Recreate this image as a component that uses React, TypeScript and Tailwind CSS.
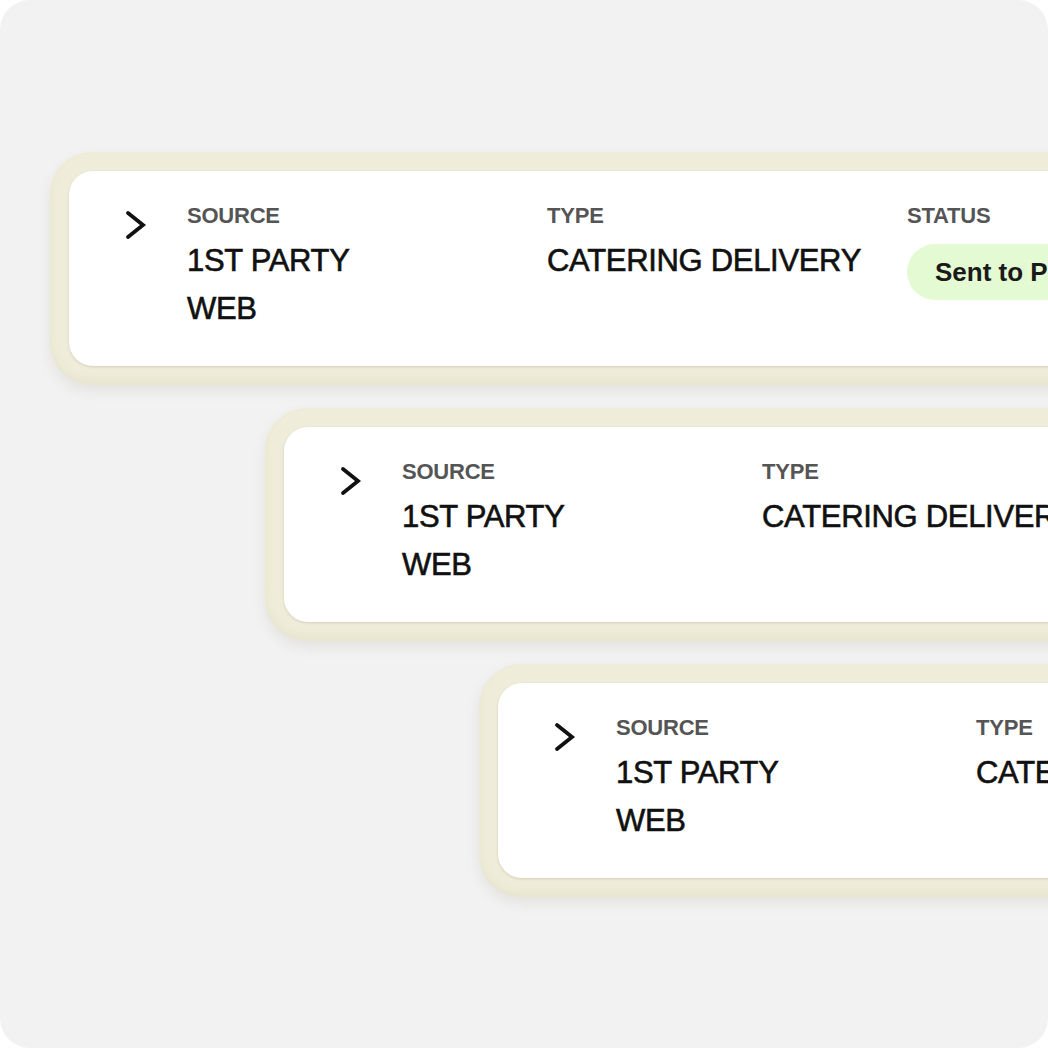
const rows = [
  { indent: 'ml-[50px]' },
  { indent: 'ml-[265px]' },
  { indent: 'ml-[479px]' },
];

function Chevron() {
  return (
    <svg width="24" height="32" viewBox="0 0 24 32" fill="none" className="mt-[6px] ml-[2px]">
      <polyline
        points="3,3 18,15 3,27"
        stroke="#111111"
        strokeWidth="3.8"
        strokeLinecap="round"
        strokeLinejoin="miter"
      />
    </svg>
  );
}

function Field({ label, children }: { label: string; children: React.ReactNode }) {
  return (
    <div className="w-[360px] shrink-0">
      <div className="text-[22px] leading-[24px] font-bold tracking-[-0.01em] text-[#555555]">{label}</div>
      {children}
    </div>
  );
}

function OrderRow({ indent }: { indent: string }) {
  return (
    <div
      className={`${indent} w-[1150px] shrink-0 rounded-[42px] bg-[#efedd9] p-[19px] shadow-[0_6px_14px_rgba(60,55,20,0.08),inset_0_-5px_8px_rgba(120,110,50,0.06)]`}
    >
      <div className="flex h-[195px] rounded-[24px] bg-white pl-[54px] pt-[33px] shadow-[0_1px_3px_rgba(0,0,0,0.12)]">
        <div className="w-[64px] shrink-0">
          <Chevron />
        </div>
        <Field label="SOURCE">
          <div className="mt-[9px] max-w-[220px] text-[31px] leading-[48px] tracking-[-0.01em] text-[#111111] [-webkit-text-stroke:0.6px_#111111]">
            1ST PARTY WEB
          </div>
        </Field>
        <Field label="TYPE">
          <div className="mt-[9px] text-[31px] leading-[48px] tracking-[-0.01em] text-[#111111] [-webkit-text-stroke:0.6px_#111111]">
            CATERING DELIVERY
          </div>
        </Field>
        <Field label="STATUS">
          <div className="mt-[16px] inline-flex h-[56px] items-center whitespace-nowrap rounded-full bg-[#e4fad3] px-[28px] text-[26px] font-bold text-[#1a1a1a]">
            Sent to POS
          </div>
        </Field>
      </div>
    </div>
  );
}

export default function App() {
  return (
    <div className="min-h-screen bg-white" style={{ fontFamily: '"Liberation Sans", Arial, sans-serif' }}>
      <div className="flex h-[1048px] w-[1048px] flex-col gap-[23px] overflow-hidden rounded-[30px] bg-[#f2f2f2] pt-[152px]">
        {rows.map((r, i) => (
          <OrderRow key={i} indent={r.indent} />
        ))}
      </div>
    </div>
  );
}
